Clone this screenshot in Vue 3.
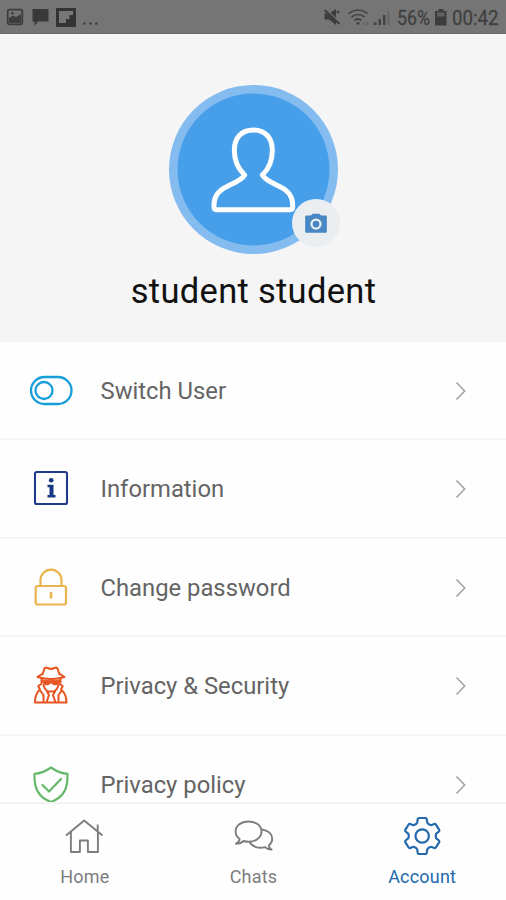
<script setup>
const items = [
  { icon: 'switch', label: 'Switch User' },
  { icon: 'info', label: 'Information' },
  { icon: 'lock', label: 'Change password' },
  { icon: 'spy', label: 'Privacy & Security' },
  { icon: 'shield', label: 'Privacy policy' },
]
const tabs = [
  { icon: 'home', label: 'Home' },
  { icon: 'chats', label: 'Chats' },
  { icon: 'account', label: 'Account', active: true },
]
</script>

<template>
  <div class="screen">
    <header class="status">
      <svg class="status-left" viewBox="0 0 110 33" width="110" height="33">
        <rect x="7.700" y="9.700" width="14.600" height="14.600" rx="1.500" fill="none" stroke="#3d3d3d" stroke-width="1.800" />
        <path d="M9 23v-5l4-2.500 3 1.500 5-3v9z" fill="#3d3d3d" />
        <circle cx="12.300" cy="13.300" r="1.400" fill="#3d3d3d" />
        <path d="M32.500 9H48.500v12.500H38L34.500 26v-4.500h-2z" fill="#393939" />
        <path d="M56 8h20v19H56z" fill="#343434" />
        <path d="M59 11h14v4h-3.500v4H66v4h-7z" fill="#777" />
        <g fill="#3d3d3d"><circle cx="84.300" cy="23.500" r="1.300" /><circle cx="90.300" cy="23.500" r="1.300" /><circle cx="96.300" cy="23.500" r="1.300" /></g>
      </svg>
      <svg class="status-right" viewBox="310 0 196 33" width="196" height="33">
        <path d="M324.500 13.500h4.500l7-4.500v16l-7-5.500h-4.500z" fill="#3d3d3d" />
        <path d="M326 9.500l14 13" fill="none" stroke="#757575" stroke-width="1.500" />
        <path d="M324.500 10l15 14M337 13l2-2" fill="none" stroke="#3d3d3d" stroke-width="2" />
        <g fill="none" stroke="#444" stroke-width="1.700">
          <path d="M348.500 13.500q9.500-7 19 0M351.500 17q6.500-5 13 0M354.500 20.500q3.500-3 7 0" />
        </g>
        <circle cx="358" cy="23.300" r="1.500" fill="#444" />
        <path d="M364 22v3M367.500 22v3" stroke="#5d5d5d" stroke-width="1.300" />
        <path d="M373.500 22.500h3V25h-3zM378.500 19h2.500v6h-2.500zM383 15h2.500v10H383z" fill="#444" />
        <path d="M387.500 11h2v14h-2z" fill="#656565" />
        <text x="397" y="24.700" textLength="33" lengthAdjust="spacingAndGlyphs">56%</text>
        <path d="M438.500 9h5v2h3v14.500h-11.500V11h3.500z" fill="#3d3d3d" />
        <path d="M437 12.500h7.500v4H437z" fill="#606060" />
        <text x="452" y="24.700" textLength="46.500" lengthAdjust="spacingAndGlyphs">00:42</text>
      </svg>
    </header>

    <section class="profile">
      <div class="avatar">
        <svg viewBox="28 28 507 507" width="169" height="169">
          <circle cx="281.500" cy="281.500" r="253.500" fill="#84bcf0" />
          <circle cx="281.500" cy="281.500" r="228" fill="#479fe9" />
          <path d="M281 163C245 163 224 187 224 224C224 258 235 280 255 298C246 314 221 323 201 333C174 346 163 362 163 388V395Q163 402 170 402H392Q399 402 399 395V388C399 362 388 346 361 333C341 323 317 314 308 298C328 280 338 258 338 224C338 187 317 163 281 163Z" fill="none" stroke="#fff" stroke-width="15" stroke-linejoin="round" />
        </svg>
        <span class="camera">
          <svg viewBox="0 0 24 24" width="26" height="26">
            <path fill="#4687c4" fill-rule="evenodd" d="M9 3.500 7.200 5H3.200a1.200 1.200 0 0 0-1.200 1.200v13.600c0 .7.500 1.200 1.200 1.200h17.600c.7 0 1.200-.5 1.200-1.200V6.200c0-.7-.5-1.200-1.200-1.200h-4L15 3.500H9zm3 14.700a5.200 5.200 0 1 1 0-10.400 5.200 5.200 0 0 1 0 10.400z" />
            <circle cx="12" cy="13" r="3.100" fill="#4687c4" />
          </svg>
        </span>
      </div>
      <h1>student student</h1>
    </section>

    <main class="menu">
      <div v-for="item in items" :key="item.icon" class="row">
        <svg class="icon" viewBox="0 0 48 48" width="48" height="48" fill="none" stroke-linejoin="round" stroke-linecap="round">
          <g v-if="item.icon === 'switch'" stroke="#169edb" stroke-width="2.300">
            <rect x="4" y="10" width="40.500" height="27" rx="13.500" />
            <circle cx="17" cy="23.500" r="8.500" />
          </g>
          <g v-else-if="item.icon === 'info'">
            <rect x="8" y="7" width="32" height="32" rx="1.800" stroke="#1f3b89" stroke-width="2.100" />
            <circle cx="24.200" cy="15.200" r="2.300" fill="#173783" />
            <path d="M20.500 19.800h6v10.200h2v2.500h-8v-2.500h2v-7.700h-2z" fill="#173783" />
          </g>
          <g v-else-if="item.icon === 'lock'" stroke="#e9b34e" stroke-width="2.200">
            <rect x="8.700" y="22" width="30.300" height="18.500" rx="2" />
            <path d="M13.500 22V16.200a10.500 10.500 0 0 1 21 0V22" />
            <path d="M24 29v4.500" stroke-width="2.600" />
          </g>
          <g v-else-if="item.icon === 'spy'" stroke="#e75420" stroke-width="2">
            <path d="M15.500 12.500 17.500 6.500q1.300-1.500 3-.5 3.500 1.800 7 0 1.700-1 3 .5l2 6M15 12l-4.500 3q13.500 4 27 0L33 12M14.500 16.500v4M33.500 16.500v4" />
            <path d="M15.500 18.200h17v2l-2.500 2.500h-3.500L24 20.700l-2.500 2H18l-2.500-2.500z" fill="#e75420" stroke-width="1" />
            <path d="M16.500 23q1.500 5 4.500 6.500h6q3-1.500 4.500-6.500M14.300 22l-3 2 1.700 3.500Q8 31.500 8 40.500h31.500q0-9-5.500-13L35.700 24l-3-2M20 29.500 22 33l-2.500 7.500M28 29.500 26 33l2.500 7.500M13.500 29l3 4v7M34.500 29l-3 4v7" />
          </g>
          <g v-else stroke="#66b96b" stroke-width="2.200">
            <path d="M24 6.500Q32.500 12.500 40.500 12.800C41 27 37 36 24 41C11 36 7 27 7.500 12.800Q15.500 12.500 24 6.500Z" />
            <path d="m15.500 24 6.500 6.500 12-12.500" />
          </g>
        </svg>
        <span class="label">{{ item.label }}</span>
        <svg class="chevron" viewBox="0 0 12 20" width="12" height="20"><path d="m1.500 1.500 8.200 8.500-8.200 8.500" fill="none" stroke="#a0a0a0" stroke-width="1.500" /></svg>
      </div>
    </main>

    <nav class="tabs">
      <div v-for="tab in tabs" :key="tab.icon" class="tab" :class="{ active: tab.active }">
        <svg viewBox="0 0 44 44" width="44" height="44" fill="none" stroke="currentColor" stroke-width="1.900" stroke-linejoin="round">
          <path v-if="tab.icon === 'home'" d="M4 21.500 22.200 6.500l18.300 15M8.900 18v20h9V26.500h8V38h10V18M35.700 17v-6.500" />
          <template v-else-if="tab.icon === 'chats'">
            <path d="M17.500 7.500c-7.500 0-12.900 4.300-12.900 10 0 3.200 1.500 5.700 4 7.500-.2 2-1.300 3.500-3.600 4.700 3.200 0 5.700-.8 7.600-2.700 1.600.5 3.100.8 4.900.8 7.500 0 13-4.500 13-10.300s-5.500-10-13-10Z" />
            <path d="M30.800 15.500c6.500.9 10.400 4.500 10.400 9.300 0 2.700-1.300 5-3.300 6.700 0 1.800.8 3 2.700 4-3 .2-5-.7-6.600-2.300-6.300 1.700-12.800-.3-15.500-5.200" />
          </template>
          <g v-else stroke-width="2.200">
            <path d="M19 4h6.500q1 0 1.200 1l.6 3.500q.3 1 1.200 1.500l1.500.9q.9.500 1.800.1l2.500-1q1-.4 1.600.5l3.300 5.300q.5 1-.3 1.700l-2.300 1.900q-.8.700-.8 1.600v2q0 .9.800 1.600l2.300 1.900q.8.700.3 1.700l-3.300 5.300q-.6.900-1.600.5l-2.500-1q-.9-.4-1.800.1l-1.500.9q-.9.500-1.200 1.500l-.6 3.500q-.2 1-1.200 1H19q-1 0-1.200-1l-.6-3.500q-.3-1-1.200-1.500l-1.500-.9q-.9-.5-1.800-.1l-2.500 1q-1 .4-1.600-.5l-3.300-5.300q-.5-1 .3-1.700l2.300-1.900q.8-.7.800-1.600v-2q0-.9-.8-1.600l-2.300-1.900q-.8-.7-.3-1.700l3.300-5.300q.6-.9 1.600-.5l2.500 1q.9.400 1.800-.1l1.500-.9q.9-.5 1.200-1.500l.6-3.500q.2-1 1.200-1z" />
            <circle cx="22.200" cy="22" r="6.700" />
          </g>
        </svg>
        <span>{{ tab.label }}</span>
      </div>
    </nav>
  </div>
</template>

<style>
body {
  margin: 0;
}
</style>

<style scoped>
.screen {
  width: 506px;
  height: 900px;
  display: flex;
  flex-direction: column;
  overflow: hidden;
  background: #fefefe;
  font-family: Roboto, "Liberation Sans", sans-serif;
}
.status {
  box-sizing: border-box;
  height: 34px;
  flex: none;
  display: flex;
  justify-content: space-between;
  background: #757575;
  border-bottom: 1px solid #686868;
}
.status text {
  font-size: 19.5px;
  fill: #404040;
  stroke: #404040;
  stroke-width: 0.3px;
}
.profile {
  box-sizing: border-box;
  height: 308px;
  flex: none;
  padding-top: 50.5px;
  display: flex;
  flex-direction: column;
  align-items: center;
  background: #f5f5f5;
}
.avatar {
  position: relative;
  width: 169px;
  height: 169px;
}
.avatar > svg {
  display: block;
}
.camera {
  position: absolute;
  left: 123px;
  top: 114px;
  width: 48px;
  height: 48px;
  border-radius: 50%;
  background: #ebeef0;
  display: flex;
  align-items: center;
  justify-content: center;
}
h1 {
  margin: 17.5px 0 0 1px;
  font-size: 34.5px;
  line-height: 41px;
  font-weight: 400;
  letter-spacing: 0.3px;
  color: #111;
  white-space: nowrap;
}
.menu {
  flex: 1;
  min-height: 0;
  overflow: hidden;
}
.row {
  box-sizing: border-box;
  height: 98.6px;
  padding: 2px 39px 0 27px;
  display: flex;
  align-items: center;
  border-bottom: 2px solid #f4f4f4;
}
.row:first-child {
  height: 98px;
}
.icon {
  flex: none;
}
.label {
  flex: 1;
  margin-left: 25.5px;
  font-size: 23.8px;
  line-height: 30px;
  color: #646464;
  white-space: nowrap;
}
.tabs {
  box-sizing: border-box;
  height: 98px;
  flex: none;
  display: flex;
  background: #fefefe;
  border-top: 2px solid #f3f3f3;
}
.tab {
  flex: 1;
  padding-top: 10px;
  display: flex;
  flex-direction: column;
  align-items: center;
  font-size: 18px;
  line-height: 24px;
  letter-spacing: 0.2px;
  color: #7d7d7d;
}
.tab span {
  margin: 7px 0 0 1px;
}
.tab.active {
  color: #2168ac;
}
</style>
